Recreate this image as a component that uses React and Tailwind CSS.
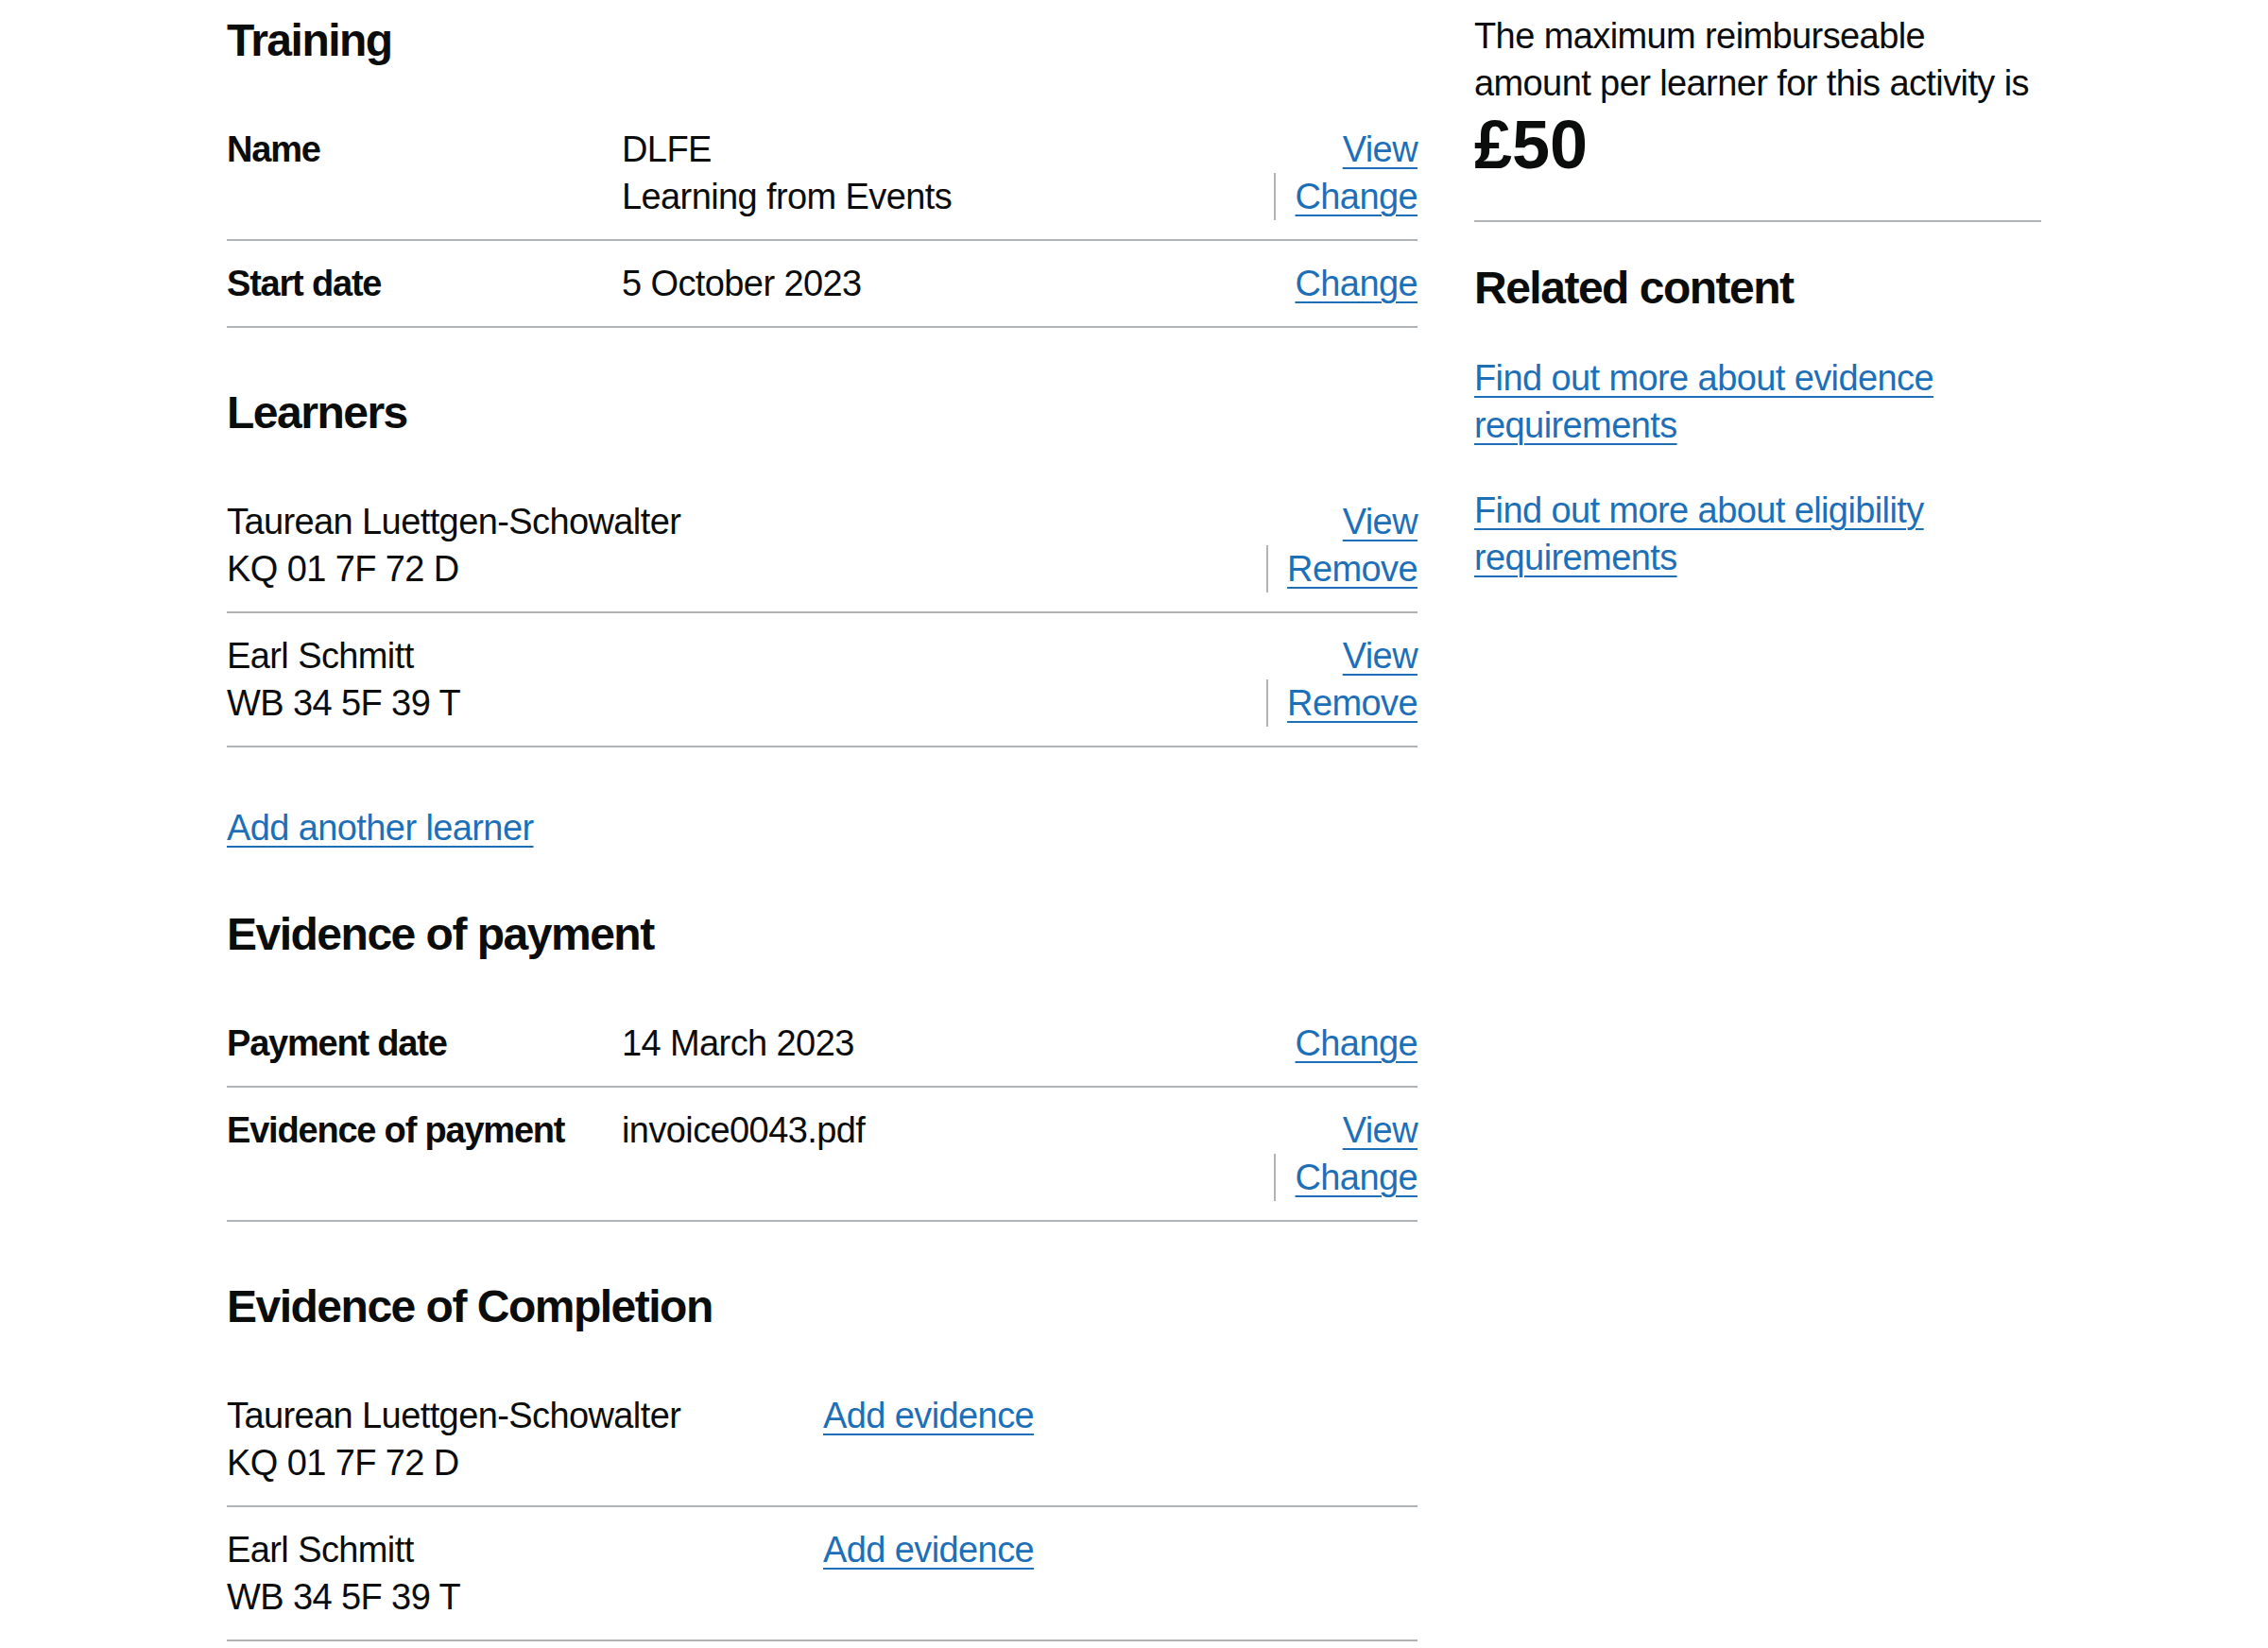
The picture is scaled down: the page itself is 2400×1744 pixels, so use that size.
import React from 'react';

const link = 'text-[#1d70b8] underline decoration-2 underline-offset-[6px]';

function Heading({ children }) {
  return <h2 className="text-[48px] leading-[60px] font-bold tracking-[-1.5px] mb-[40px]">{children}</h2>;
}

function Actions({ items }) {
  return (
    <div className="flex flex-col items-end shrink-0">
      {items.map((label, i) => (
        <span key={label} className={i > 0 ? 'border-l-2 border-[#b1b4b6] pl-[20px]' : ''}>
          <a href="#" className={link}>{label}</a>
        </span>
      ))}
    </div>
  );
}

function Row({ label, bold = false, value, actions }) {
  return (
    <div className="flex border-b-2 border-[#b1b4b6] py-[20px]">
      <div className={bold ? 'w-[418px] shrink-0 font-bold tracking-[-1.2px]' : 'w-[418px] shrink-0'}>{label}</div>
      <div className="flex-1">{value}</div>
      {actions && <Actions items={actions} />}
    </div>
  );
}

function LearnerRow({ name, nino }) {
  return (
    <div className="flex border-b-2 border-[#b1b4b6] py-[20px]">
      <div className="flex-1">
        <div>{name}</div>
        <div>{nino}</div>
      </div>
      <Actions items={['View', 'Remove']} />
    </div>
  );
}

function CompletionRow({ name, nino }) {
  return (
    <div className="flex border-b-2 border-[#b1b4b6] py-[20px]">
      <div className="w-[631px] shrink-0">
        <div>{name}</div>
        <div>{nino}</div>
      </div>
      <div className="flex-1">
        <a href="#" className={link}>Add evidence</a>
      </div>
    </div>
  );
}

const learners = [
  { name: 'Taurean Luettgen-Schowalter', nino: 'KQ 01 7F 72 D' },
  { name: 'Earl Schmitt', nino: 'WB 34 5F 39 T' },
];

export default function App() {
  return (
    <div className="min-h-[1744px] bg-white text-[#0b0c0c] font-['Liberation_Sans',Arial,sans-serif] text-[38px] leading-[50px] tracking-[-0.6px]">
      <div className="w-[1920px] mx-auto pt-[13px] flex gap-[60px]">
        {/* Main column */}
        <div className="w-[1260px] shrink-0">
          <Heading>Training</Heading>
          <div className="mb-[60px]">
            <Row
              label="Name"
              bold
              value={<><div>DLFE</div><div>Learning from Events</div></>}
              actions={['View', 'Change']}
            />
            <Row label="Start date" bold value="5 October 2023" actions={['Change']} />
          </div>

          <Heading>Learners</Heading>
          <div className="mb-[60px]">
            {learners.map((l) => (
              <LearnerRow key={l.nino} {...l} />
            ))}
          </div>
          <p className="mb-[58px]">
            <a href="#" className={link}>Add another learner</a>
          </p>

          <Heading>Evidence of payment</Heading>
          <div className="mb-[60px]">
            <Row label="Payment date" bold value="14 March 2023" actions={['Change']} />
            <Row label="Evidence of payment" bold value="invoice0043.pdf" actions={['View', 'Change']} />
          </div>

          <Heading>Evidence of Completion</Heading>
          <div>
            {learners.map((l) => (
              <CompletionRow key={l.nino} {...l} />
            ))}
          </div>
        </div>

        {/* Sidebar */}
        <div className="w-[600px] shrink-0">
          <p>The maximum reimburseable amount per learner for this activity is</p>
          <p className="text-[72px] leading-[80px] font-bold tracking-normal mb-[40px]">£50</p>
          <hr className="border-0 border-t-2 border-[#b1b4b6] mb-[40px]" />
          <Heading>Related content</Heading>
          <p className="mb-[40px]">
            <a href="#" className={link}>Find out more about evidence requirements</a>
          </p>
          <p className="mb-[40px]">
            <a href="#" className={link}>Find out more about eligibility requirements</a>
          </p>
        </div>
      </div>
    </div>
  );
}
